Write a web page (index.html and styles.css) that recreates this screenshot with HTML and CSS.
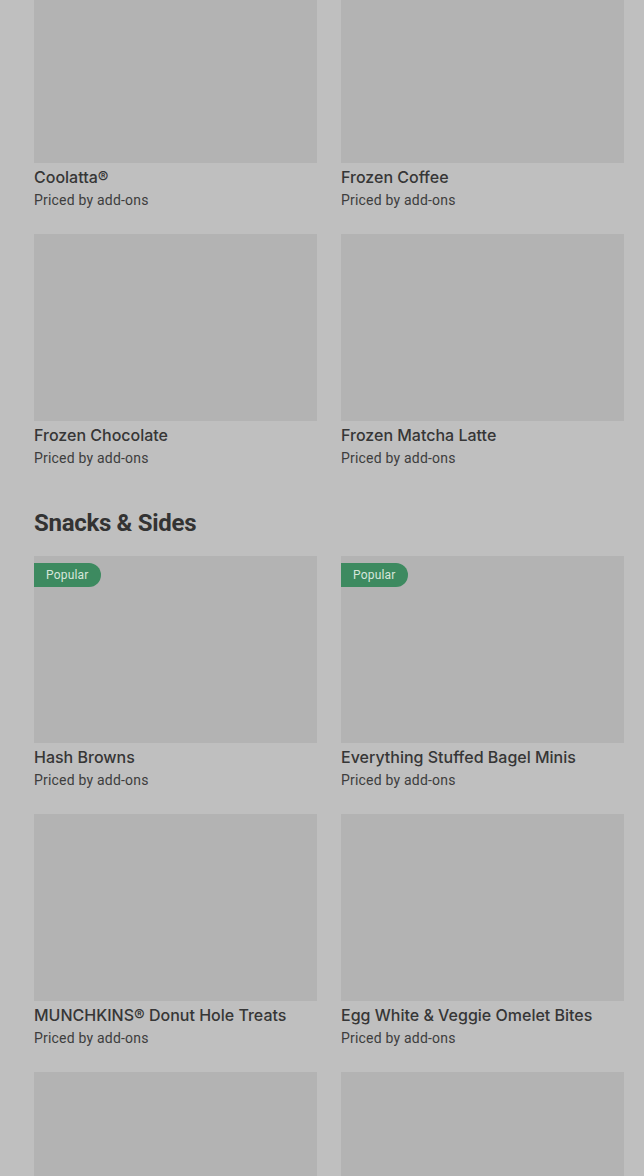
FILE: index.html
```html
<!DOCTYPE html>
<html lang="en">
<head>
<meta charset="utf-8">
<title>Menu</title>
<link rel="stylesheet" href="styles.css">
</head>
<body>
<main class="page">
  <section class="grid grid-first">
    <article class="card"><div class="thumb"></div><h3 class="name">Coolatta®</h3><p class="price">Priced by add-ons</p></article>
    <article class="card"><div class="thumb"></div><h3 class="name">Frozen Coffee</h3><p class="price">Priced by add-ons</p></article>
    <article class="card"><div class="thumb"></div><h3 class="name">Frozen Chocolate</h3><p class="price">Priced by add-ons</p></article>
    <article class="card"><div class="thumb"></div><h3 class="name">Frozen Matcha Latte</h3><p class="price">Priced by add-ons</p></article>
  </section>
  <section class="section">
    <h2 class="section-title">Snacks &amp; Sides</h2>
    <div class="grid">
      <article class="card"><div class="thumb"><span class="badge">Popular</span></div><h3 class="name">Hash Browns</h3><p class="price">Priced by add-ons</p></article>
      <article class="card"><div class="thumb"><span class="badge">Popular</span></div><h3 class="name">Everything Stuffed Bagel Minis</h3><p class="price">Priced by add-ons</p></article>
      <article class="card"><div class="thumb"></div><h3 class="name">MUNCHKINS® Donut Hole Treats</h3><p class="price">Priced by add-ons</p></article>
      <article class="card"><div class="thumb"></div><h3 class="name">Egg White &amp; Veggie Omelet Bites</h3><p class="price">Priced by add-ons</p></article>
      <article class="card"><div class="thumb"></div><h3 class="name">&nbsp;</h3><p class="price">&nbsp;</p></article>
      <article class="card"><div class="thumb"></div><h3 class="name">&nbsp;</h3><p class="price">&nbsp;</p></article>
    </div>
  </section>
</main>
</body>
</html>
```
FILE: styles.css
```css
html, body {
  margin: 0;
  padding: 0;
  background: #bfbfbf;
  overflow: hidden;
}
body {
  font-family: Inter, "Noto Sans", sans-serif;
  color: #333;
}
.page {
  padding: 0 20px 0 34px;
}
.grid {
  display: grid;
  grid-template-columns: 1fr 1fr;
  column-gap: 24px;
  row-gap: 24px;
}
.grid-first {
  margin-top: -24px;
}
.card {
  display: flex;
  flex-direction: column;
}
.thumb {
  position: relative;
  height: 187px;
  background: #b3b3b3;
}
.badge {
  position: absolute;
  left: 0;
  top: 7px;
  height: 24px;
  line-height: 24px;
  padding: 0 12px;
  border-radius: 0 12px 12px 0;
  background: #3d8a60;
  color: #d6e6db;
  font-family: Roboto, sans-serif;
  font-size: 12px;
  letter-spacing: 0.2px;
}
.name {
  margin: 4px 0 0;
  font-size: 16px;
  line-height: 20px;
  font-weight: 500;
  color: #363636;
}
.price {
  margin: 3px 0 0;
  font-family: Roboto, sans-serif;
  font-size: 14px;
  line-height: 20px;
  letter-spacing: 0.2px;
  color: #3d3d3d;
}
.section {
  padding-top: 39px;
}
.section-title {
  margin: 0 0 17px;
  font-family: Roboto, sans-serif;
  font-size: 24px;
  line-height: 32px;
  font-weight: 700;
  letter-spacing: -0.3px;
  color: #333;
}
```
